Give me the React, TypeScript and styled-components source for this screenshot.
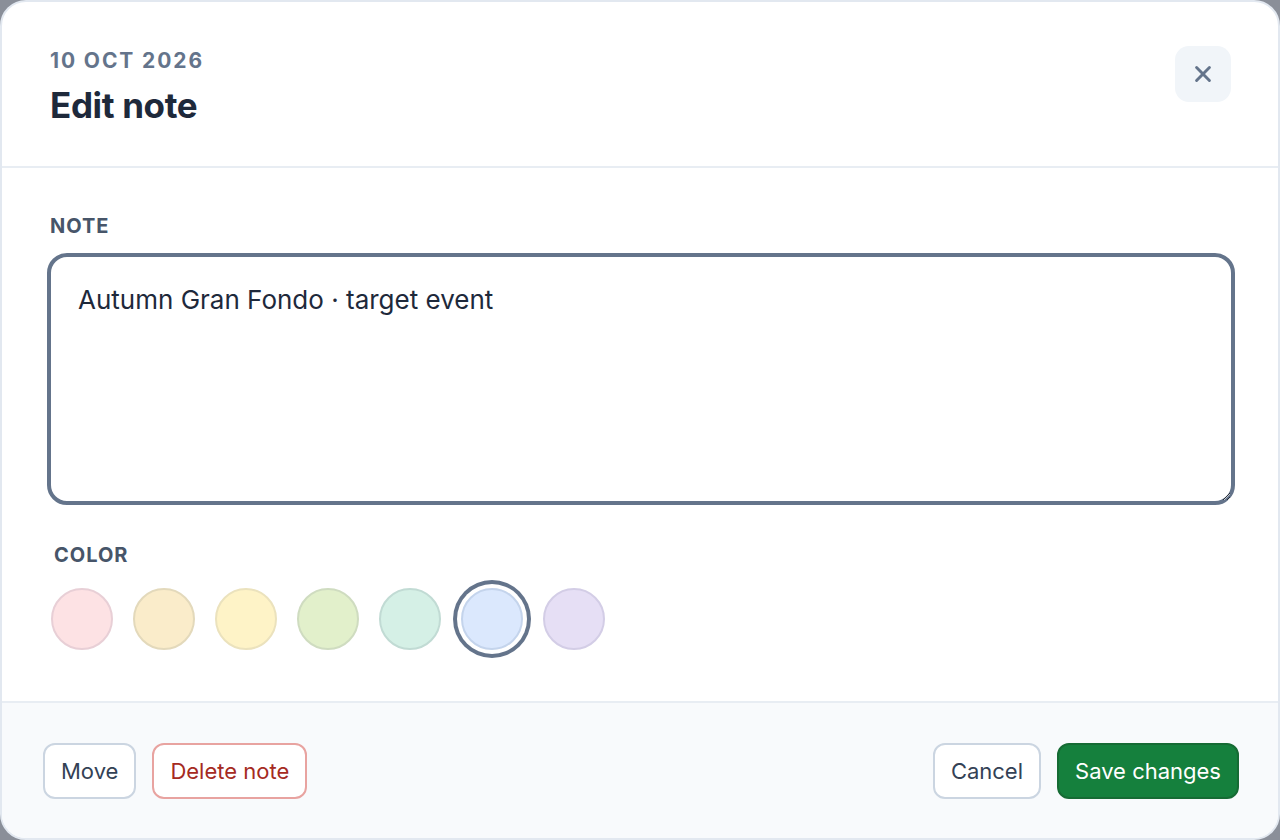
import React from "react";
import styled, { createGlobalStyle } from "styled-components";

const Global = createGlobalStyle`
  html, body { margin: 0; padding: 0; }
  body { background: #8a8f99; font-family: Inter, "Noto Sans", sans-serif; }
  * { box-sizing: border-box; }
`;

const Dialog = styled.div`
  width: 1280px;
  height: 840px;
  background: #ffffff;
  border: 2px solid #e2e8f0;
  border-radius: 26px;
  overflow: hidden;
  display: flex;
  flex-direction: column;
`;

const Header = styled.header`
  height: 166px;
  padding: 44px 48px 0 48px;
  border-bottom: 2px solid #e8edf3;
  display: flex;
  justify-content: space-between;
  align-items: flex-start;
`;

const Titles = styled.div`
  display: flex;
  flex-direction: column;
  gap: 10px;
  padding-top: 2px;
`;

const DateLabel = styled.div`
  font-size: 21px;
  font-weight: 700;
  letter-spacing: 0.09em;
  color: #64748b;
  line-height: 26px;
`;

const Title = styled.h1`
  margin: 0;
  font-size: 35px;
  font-weight: 700;
  letter-spacing: -0.01em;
  color: #1e293b;
  line-height: 42px;
`;

const CloseButton = styled.button`
  width: 56px;
  height: 56px;
  margin-right: -1px;
  border: none;
  border-radius: 14px;
  background: #f1f5f9;
  display: flex;
  align-items: center;
  justify-content: center;
  color: #64748b;
  padding: 0;
`;

const Body = styled.main`
  flex: 1;
  padding: 46px 43px 0 45px;
  display: flex;
  flex-direction: column;
`;

const FieldLabel = styled.label<{ $indent?: number }>`
  display: block;
  font-size: 20px;
  font-weight: 700;
  letter-spacing: 0.05em;
  color: #475569;
  line-height: 24px;
  margin-left: ${(p) => p.$indent ?? 3}px;
`;

const TextArea = styled.textarea`
  margin-top: 15px;
  width: 100%;
  height: 252px;
  border: 4px solid #64748b;
  border-radius: 20px;
  padding: 26px 27px;
  font-family: Inter, "Noto Sans", sans-serif;
  font-size: 26px;
  line-height: 34px;
  color: #1e293b;
  outline: none;
  resize: vertical;
  background: #fff;
`;

const ColorSection = styled.div`
  margin-top: 38px;
  display: flex;
  flex-direction: column;
`;

const Swatches = styled.div`
  margin-top: 21px;
  display: flex;
  gap: 20px;
  align-items: center;
  padding-left: 4px;
`;

const Swatch = styled.button<{ $bg: string; $border: string; $selected?: boolean }>`
  width: 62px;
  height: 62px;
  border-radius: 50%;
  background: ${(p) => p.$bg};
  border: 2px solid ${(p) => p.$border};
  padding: 0;
  box-shadow: ${(p) => (p.$selected ? "0 0 0 4px #ffffff, 0 0 0 8px #64748b" : "none")};
`;

const Footer = styled.footer`
  height: 137px;
  background: #f8fafc;
  border-top: 2px solid #e8edf3;
  padding: 0 39px 0 41px;
  display: flex;
  align-items: center;
  justify-content: space-between;
`;

const Group = styled.div`
  display: flex;
  gap: 16px;
`;

const Button = styled.button<{ $variant?: "default" | "danger" | "primary" }>`
  height: 56px;
  padding: 0 16px;
  border-radius: 12px;
  font-family: Inter, "Noto Sans", sans-serif;
  font-size: 22px;
  font-weight: 400;
  border: 2px solid
    ${(p) =>
      p.$variant === "danger" ? "#e8a3a0" : p.$variant === "primary" ? "#166b34" : "#cbd5e1"};
  background: ${(p) => (p.$variant === "primary" ? "#15803d" : "#ffffff")};
  color: ${(p) =>
    p.$variant === "danger" ? "#a52a22" : p.$variant === "primary" ? "#ffffff" : "#334155"};
`;

const swatches = [
  { bg: "#fde2e4", border: "#e8cfd6" },
  { bg: "#faecca", border: "#e3d9bb" },
  { bg: "#fef3c7", border: "#ebe2bd" },
  { bg: "#e2f0cb", border: "#cfdcc0" },
  { bg: "#d5f0e6", border: "#c1dbd4" },
  { bg: "#dbe8fd", border: "#c4d4ec", selected: true },
  { bg: "#e6dff5", border: "#d3cde6" },
];

export default function App() {
  return (
    <>
      <Global />
      <Dialog>
        <Header>
          <Titles>
            <DateLabel>10 OCT 2026</DateLabel>
            <Title>Edit note</Title>
          </Titles>
          <CloseButton aria-label="Close">
            <svg width="22" height="22" viewBox="0 0 24 24" fill="none" stroke="currentColor" strokeWidth="3.2" strokeLinecap="round">
              <path d="M5 5 L19 19 M19 5 L5 19" />
            </svg>
          </CloseButton>
        </Header>
        <Body>
          <FieldLabel>NOTE</FieldLabel>
          <TextArea defaultValue="Autumn Gran Fondo · target event" />
          <ColorSection>
            <FieldLabel $indent={7}>COLOR</FieldLabel>
            <Swatches>
              {swatches.map((s, i) => (
                <Swatch key={i} $bg={s.bg} $border={s.border} $selected={s.selected} />
              ))}
            </Swatches>
          </ColorSection>
        </Body>
        <Footer>
          <Group>
            <Button>Move</Button>
            <Button $variant="danger">Delete note</Button>
          </Group>
          <Group>
            <Button>Cancel</Button>
            <Button $variant="primary">Save changes</Button>
          </Group>
        </Footer>
      </Dialog>
    </>
  );
}
